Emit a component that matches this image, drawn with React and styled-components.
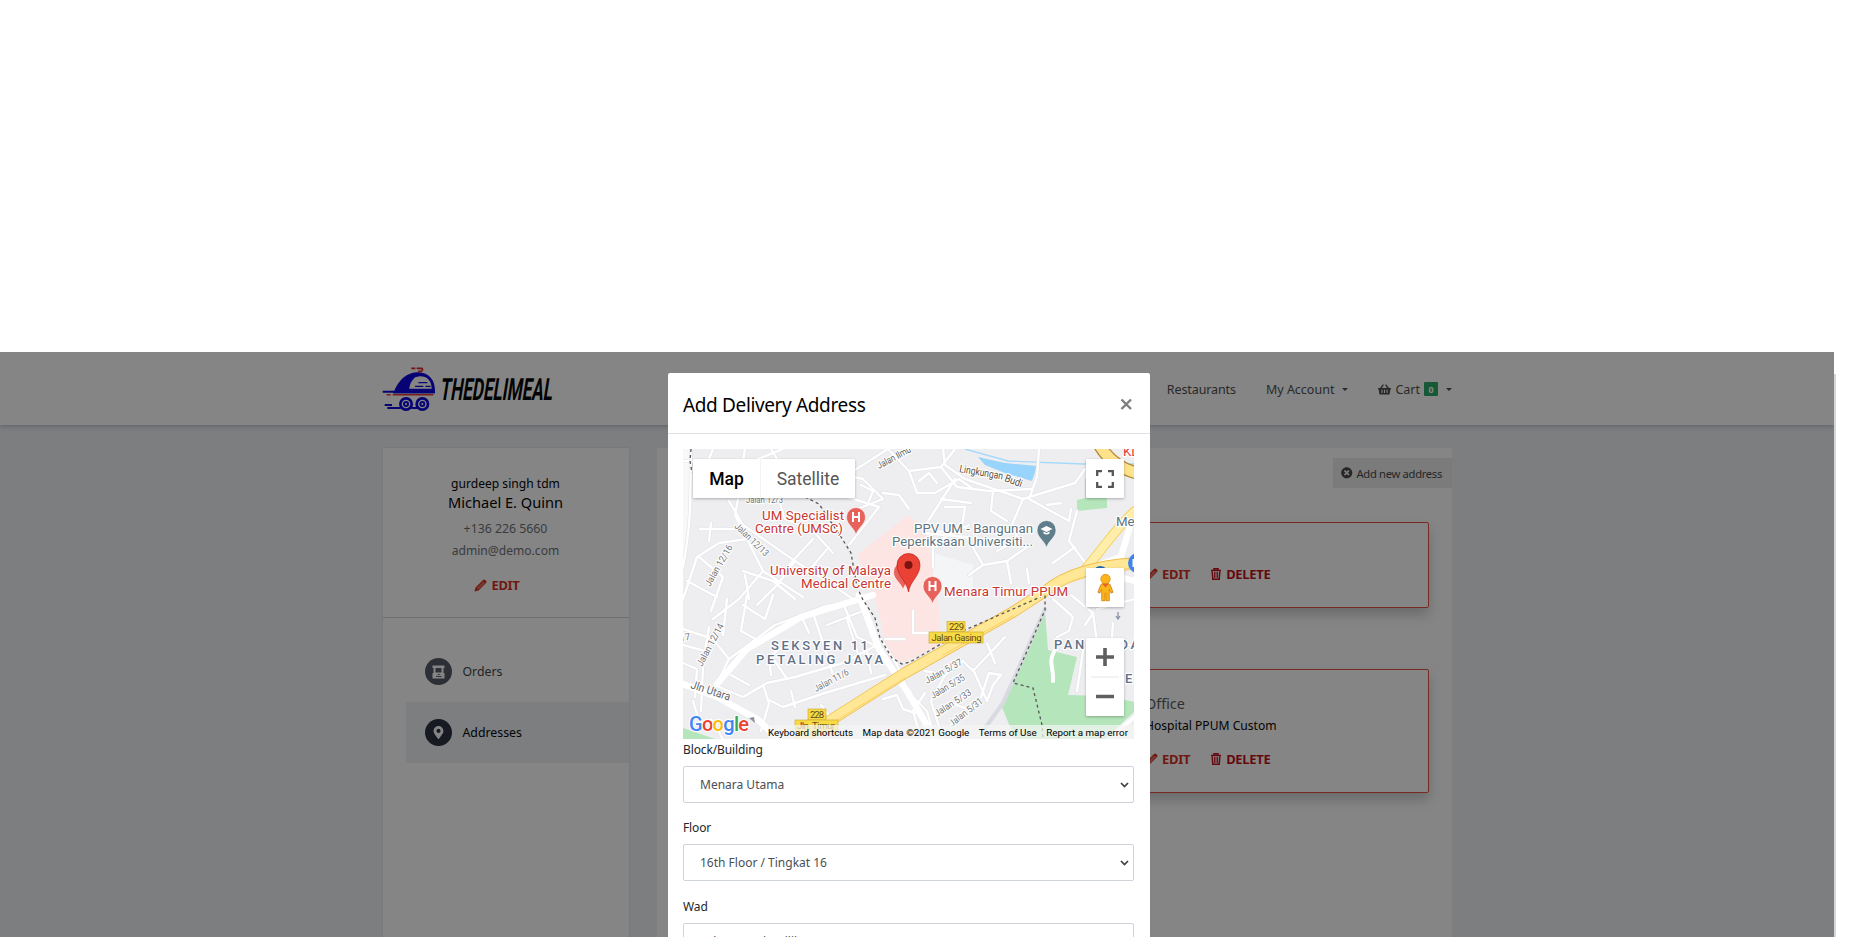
import React from "react";
import styled, { createGlobalStyle, css } from "styled-components";
import { FaShoppingBasket, FaTimesCircle, FaMapMarkerAlt } from "react-icons/fa";

const Global = createGlobalStyle`
  * { box-sizing: border-box; }
  body { margin: 0; background: #fff; overflow: hidden; font-family: "Noto Sans", "Open Sans", sans-serif; font-size: 12.3px; color: #000; }
`;

const Screen = styled.div`width: 1850px; height: 937px; padding-top: 352px; overflow: hidden; display: flex; background: #fff;`;
const Site = styled.div`position: relative; width: 1834px; height: 585px; overflow: hidden; background: #eef1f5;`;
const ScrollTrack = styled.div`width: 2px; margin-top: 22px; background: #d6d6d6;`;

const Header = styled.header`
  height: 73px; padding: 0 382px; display: flex; align-items: center; justify-content: space-between;
  background: #fff; box-shadow: 0 2px 4px rgba(60, 70, 90, 0.25); position: relative;
`;
const Nav = styled.nav`display: flex; align-items: center; height: 73px; padding-top: 1px; color: #4c4c4c; font-size: 12.5px;`;
const NavItem = styled.div`
  display: flex; align-items: center; white-space: nowrap; letter-spacing: ${p => p.$track || 0}px;
  margin-left: ${p => p.$gap || 0}px;
`;
const Basket = styled(FaShoppingBasket)`margin-right: 4px;`;
const Caret = styled.i`border: 3px solid transparent; border-top-color: #4c4c4c; border-bottom: 0; margin-left: ${p => p.$gap}px;`;
const CartCount = styled.span`
  width: 14px; height: 14px; margin-left: 4px; background: #28a965; color: #fff; font-size: 9px; font-weight: 700;
  display: flex; align-items: center; justify-content: center; border-radius: 1px;
`;

const Main = styled.main`display: flex; gap: 28.5px; padding: 23px 382px 0 382.5px; height: 512px;`;
const Sidebar = styled.aside`width: 246px; background: #fff; box-shadow: 0 0 2px rgba(0, 0, 0, 0.12);`;
const Profile = styled.div`
  height: 170px; padding-top: 26px; border-bottom: 1px solid #d5d5d5; display: flex; flex-direction: column; align-items: center;
`;
const Line = styled.div`
  height: ${p => p.$h}px; line-height: ${p => p.$h}px; font-size: ${p => p.$size || 12.1}px; color: ${p => p.$color || "#000"};
  white-space: nowrap; margin-top: ${p => p.$gap || 0}px;
`;
const Action = styled.span`
  display: inline-flex; align-items: center; gap: ${p => p.$gap || 4}px; font-weight: 700; font-size: 13px;
  color: ${p => p.$color || "#d62b1a"}; letter-spacing: -0.3px;
`;
const Menu = styled.ul`list-style: none; margin: 23px 0 0 23px; padding: 0;`;
const MenuItem = styled.li`
  height: 61px; padding-left: 19px; display: flex; align-items: center; gap: 11px;
  color: ${p => (p.$active ? "#000" : "#3b3f45")}; background: ${p => (p.$active ? "#edf2f5" : "transparent")};
`;
const RoundIcon = styled.span`
  width: 27px; height: 27px; border-radius: 50%; display: flex; align-items: center; justify-content: center;
  background: ${p => (p.$active ? "#282c3f" : "#535665")}; color: #fff;
`;

const Content = styled.section`flex: 1; background: #fff; padding-top: 10px; display: flex; flex-direction: column; align-items: flex-end;`;
const AddButton = styled.button`
  border: 0; width: 119px; height: 30px; padding: 0 0 0 8px; background: #ececec; color: #454545; display: flex; align-items: center;
  gap: 4px; font: 11.2px "Noto Sans", sans-serif; white-space: nowrap; letter-spacing: -0.3px;
`;
const AddressCard = styled.article`
  width: 360px; height: ${p => p.$h}px; margin: ${p => p.$top}px 23px 0 0; border: 1px solid #e04f40; border-radius: 2px;
  box-shadow: 0 7px 12px rgba(0, 0, 0, 0.2); padding: 0 0 19px 75px; display: flex; flex-direction: column; justify-content: flex-end;
`;
const Actions = styled.div`
  display: flex; gap: 21px; height: 28px; align-items: center; margin-top: ${p => p.$top || 0}px; padding-right: ${p => p.$shift || 0}px;
`;

const Backdrop = styled.div`position: absolute; inset: 0; background: rgba(6, 6, 6, 0.49); display: flex; justify-content: center; padding: 21px 16px 0 0;`;
const Dialog = styled.div`width: 482px; height: 700px; flex: none; background: #fff; border-radius: 2px 2px 0 0;`;
const DialogHead = styled.div`
  height: 61px; padding: 2px 17px 0 15px; display: flex; align-items: center; justify-content: space-between;
  border-bottom: 1px solid #dee2e6;
`;
const DialogTitle = styled.h5`margin: 2px 0 0; font-weight: 400; font-size: 19px; letter-spacing: -0.36px; white-space: nowrap;`;
const DialogBody = styled.div`padding: 15px 16px 0 15px;`;

const MapBox = styled.div`position: relative; width: 451px; height: 290px; overflow: hidden; font-family: Roboto, sans-serif;`;
const control = css`position: absolute; background: #fff; box-shadow: 0 1px 3px rgba(0, 0, 0, 0.28); border-radius: 1px;`;
const MapType = styled.div`${control} left: 10px; top: 10px; height: 39px; display: flex; align-items: center; font-size: 17.5px;`;
const MapTab = styled.span`
  width: ${p => p.$w}px; height: 39px; display: flex; align-items: center; justify-content: center;
  font-weight: ${p => (p.$on ? 500 : 400)}; color: ${p => (p.$on ? "#000" : "#565656")};
  border-left: ${p => (p.$on ? 0 : "1px solid #f3f3f3")};
`;
const MapButton = styled.div`
  ${control} left: 403px; top: ${p => p.$top}px; width: 38px; height: ${p => p.$h || 39}px;
  display: flex; align-items: center; justify-content: center;
`;
const MapFooter = styled.div`
  position: absolute; right: 0; bottom: 0; height: 14px; padding: 0 6px 0 0; width: 366px; display: flex; align-items: center;
  justify-content: space-between; background: rgba(245, 245, 245, 0.72); font-size: 9.8px; color: #000; white-space: nowrap;
`;

const Field = styled.label`display: block; height: 78.3px;`;
const FieldLabel = styled.span`display: block; height: 27px; line-height: 22px; font-size: 12px; letter-spacing: -0.12px; color: #23272b;`;
const Select = styled.span`
  display: flex; height: 37px; align-items: center; justify-content: space-between; padding: 0 4px 0 16px;
  border: 1px solid #ced4da; border-radius: 2px; font-size: 12px; color: #495057;
`;

const Logo = () => (
  <svg width="173.4" height="46" viewBox="36 60 520 138" overflow="visible">
    <g fill="none" stroke="#0a00e0" strokeWidth="6">
      <path d="M74 139C88 105 112 84 140 82C176 82 193 103 192 139Z" fill="#0a00e0" />
      <path d="M100 128C112 104 128 93 150 91C172 91 184 104 185 128Z" fill="#fff" stroke="none" />
      <path d="M38 137H74M70 139H194M52 186H92M44 177H66M124 186H142" />
      <path d="M86 130C97 102 116 88 139 86C126 96 116 110 114 130Z" fill="#0a00e0" />
      <path d="M145 110H172M135 121H160M166 121H182" strokeWidth="3.5" />
      <circle cx="108" cy="174" r="17" strokeWidth="8" fill="#fff" />
      <circle cx="157" cy="174" r="17" strokeWidth="8" fill="#fff" />
      <circle cx="108" cy="174" r="6" /><circle cx="157" cy="174" r="6" />
    </g>
    <path d="M50 146H62M68 146H190" stroke="#e93434" strokeWidth="4.5" />
    <path d="M124 67H136M140 67H155Q160 70 155 75L144 77" stroke="#e02020" strokeWidth="5" fill="none" />
    <text transform="translate(208 161) skewX(-9)" fontFamily="Roboto, sans-serif" fontWeight="700" fontSize="92"
      textLength="337" lengthAdjust="spacingAndGlyphs" fill="#000">THEDELIMEAL</text>
  </svg>
);

const Pencil = () => (
  <svg width="13" height="13" viewBox="0 0 13 13">
    <path d="M.5 12.5 1.5 8.5 9 1Q10-.1 11.2 1L12.2 2Q13 3 12 4L4.5 11.5Z" fill="currentColor" />
    <path d="M3 9.5 9.7 2.8M4 10.3 10.7 3.6" stroke="#fff" strokeWidth=".5" />
  </svg>
);
const Trash = () => (
  <svg width="10" height="12" viewBox="0 0 10 12" fill="none" stroke="currentColor">
    <path d="M0 2.5H10M3 2V.7H7V2M1.2 3.5 1.8 11.3H8.2L8.8 3.5" strokeWidth="1.5" />
    <path d="M3.5 4V10M5 4V10M6.5 4V10" strokeWidth=".9" />
  </svg>
);
const Shop = () => (
  <svg width="13" height="14" viewBox="0 0 13 14">
    <path d="M.5.5H12.5V3H11.5V8H12.5V13.5H.5V8H1.5V3H.5ZM3.5 3V7.5H9.5V3ZM4 12H9.500V11H4ZM5 10H8.500L6.700 8.700Z" fill="#fff" fillRule="evenodd" />
  </svg>
);
const Chevron = () => (
  <svg width="9" height="6" viewBox="0 0 9 6"><path d="M1 1 4.5 4.6 8 1" fill="none" stroke="#3c4043" strokeWidth="1.7" /></svg>
);

const minorRoads = [
  "M8 0C7 50 9 70 0 118M0 12 60 16 100 0M30 0 26 10M62 0 60 12M88 0 94 10",
  "M95 48 102 70 130 82 150 104M55 50 52 66 64 90 80 122 56 150 30 170M17 80 60 80M28 74 26 92M0 150 14 108 36 94 64 90",
  "M46 52 60 76 112 112 152 138 170 150M112 112 96 134 60 122M96 134 74 156M130 90 104 118M146 98 122 126M80 122 120 148",
  "M16 108 40 128 28 162M4 132 34 148M62 126 66 150M44 150 40 186M90 132 112 150",
  "M164 26 205 0M162 26 180 30 200 50 174 60M200 44 216 46 226 60M178 36 190 42 186 52M146 34 164 48 196 58 166 96",
  "M205 0 226 22 258 18 272 0M226 22 234 44 252 44 276 30 290 40M236 32 246 24 254 34M258 18 274 38 306 42 350 40",
  "M260 0 262 16 282 30M282 30 340 50 392 34 402 20M340 50 328 78 336 90 314 102M356 0 354 28 346 50",
  "M272 30 244 74 250 82 278 84 282 58 262 58M258 50 288 54M310 42 308 62 324 72M346 50 386 72 388 60M364 56 378 54",
  "M394 62 386 92 404 116M240 84 284 88 300 116 286 126M300 116 324 112 328 134M324 112 344 98M370 114 392 98M346 134 344 120",
  "M64 146 58 182 80 194M60 156 82 170 90 146M0 180 30 190 46 210 32 238M0 196 22 202 26 178M46 210 92 176 140 158 178 150",
  "M130 164 144 206 150 226M118 166 126 184M160 154 174 188 200 200M144 176 180 162M164 170 176 208M36 238 60 248 84 234 112 228 160 214 194 196",
  "M80 236 86 254 78 282M84 250 100 258 142 244 202 226M48 226 66 236M92 212 104 230M184 202 188 224M112 258 108 242M138 256 150 272M28 270 40 290M10 252 16 272",
  "M198 190 214 216 226 244 244 262 252 290M242 222 262 226 248 252 260 290M262 226 280 212 290 222 322 188",
  "M304 194 312 214M290 220 304 252 310 236 318 226 306 224 298 248M238 290 230 262 242 244M200 250 214 246 220 260 232 264M268 254 290 262",
  "M370 150 390 168 386 182 374 188M388 146 410 164 402 176M414 160 452 150M410 164 414 194 448 196M430 174 428 202M400 202 394 242",
  "M230 162 230 184 250 184M202 190 222 190M250 118 250 94 286 76M0 214 14 220 12 248M102 196 86 208 88 226M20 218 18 262",
];
const majorRoads = ["M0 235 34 248 74 270 96 290", "M34 235 64 200 118 168 190 146", "M176 146 196 200 224 242 252 290", "M452 60 438 108 404 120 452 132"];

const Halo = styled.text`
  paint-order: stroke; stroke: #fff; stroke-width: ${p => p.$halo ?? 2.4}px; stroke-linejoin: round; font-family: Roboto, sans-serif;
`;
const GoogleMark = styled(Halo)`font-weight: 500; font-size: 20px;`;
const Street = ({ x, y, r = 0, w, children, size = 9.6, fill = "#75777b" }) => (
  <Halo transform={`translate(${x} ${y}) rotate(${r})`} fontSize={size} fill={fill} textLength={w} lengthAdjust="spacingAndGlyphs">{children}</Halo>
);
const Place = ({ x, y, w, children, fill = "#c9362f", size = 13.3, anchor = "end" }) => (
  <Halo x={x} y={y} textAnchor={anchor} fontSize={size} fill={fill} textLength={w}>{children}</Halo>
);
const Pin = ({ x, y, fill, children }) => (
  <g transform={`translate(${x} ${y})`}>
    <path d="M0 18C-2 10-9.5 8-9.5 0A9.5 9.5 0 0 1 9.5 0C9.5 8 2 10 0 18Z" fill={fill} stroke="#fff" strokeWidth=".6" />
    {children}
  </g>
);

const MapArt = () => (
  <svg width="451" height="290" viewBox="0 0 451 290">
    <rect width="452" height="290" fill="#eeeef1" />
    <path d="M0 0H8L7 60 0 116Z" fill="#f8f8f8" />
    <path d="M174 106 225 66 243 81 250 118 256 160 258 196 222 213 205 209 195 160Z" fill="#fce5e2" />
    <path d="M250 104 290 116 290 142 250 140Z" fill="#f3f5f7" />
    <path d="M394 51 402 49V30H424V59L394 62ZM362 163 365 201 394 208 385 246 422 247 452 253V262L422 290H332L319 258 330 235ZM0 279 32 290H0Z" fill="#b5e5ba" />
    <path d="M282 0 325 12 400 15H452" fill="none" stroke="#a4d9fb" strokeWidth="1.3" />
    <path d="M295 8 322 14 354 17 349 32 322 24 302 16Z" fill="#98d4fb" />
    <g fill="none" strokeLinejoin="round" strokeLinecap="round">
      {minorRoads.map(d => <path key={d} d={d} stroke="#e0e2e6" strokeWidth="3.5" />)}
      {minorRoads.map(d => <path key={d} d={d} stroke="#fff" strokeWidth="2.4" />)}
      {majorRoads.map(d => <path key={d} d={d} stroke="#fff" strokeWidth="6.5" />)}
      <path d="M371 203C365 212 371 220 370 232M452 268 432 284" stroke="#fff" strokeWidth="4" />
      <path d="M362 160 320 254 300 282" stroke="#d7dae0" strokeWidth="4" />
      <path d="M452 62C432 80 420 100 404 118" stroke="#f3cf62" strokeWidth="10" />
      <path d="M452 62C432 80 420 100 404 118" stroke="#ffeeaa" strokeWidth="8" />
      <path d="M118 290 222 224 330 163 364 141Q392 118 452 114" stroke="#eebd4c" strokeWidth="11.5" />
      <path d="M118 290 222 224 330 163 364 141Q392 118 452 114" stroke="#ffe795" strokeWidth="9.8" />
      <path d="M140 280 222 229M260 206 330 167M370 141Q400 124 452 120" stroke="#fbd163" strokeWidth="1" />
      <path d="M417 -3Q430 18 454 24" stroke="#b18a38" strokeWidth="13" />
      <path d="M417 -3Q430 18 454 24" stroke="#ffe38c" strokeWidth="10.5" />
    </g>
    <path d="M8 0 7 12 9 24M122 48 136 55 158 88 168 104 174 138 180 151 192 169 197 189 209 209 219 215 227 213 282 181 362 146V161L330 234 350 239 359 276 360 290"
      fill="none" stroke="#575757" strokeWidth="1.3" strokeDasharray="3 3" />
    <Street x={196} y={20} r={-28} w={37} fill="#5e5e5e">Jalan Ilmu</Street>
    <Street x={276} y={23} r={10} w={44} size={10.5} fill="#5e4e40">Lingkungan</Street>
    <Street x={321} y={32} r={20} w={18} size={10.5} fill="#5e4e40">Budi</Street>
    <Street x={63} y={54} w={37}>Jalan 12/3</Street>
    <Street x={51} y={78} r={44} w={43}>Jalan 12/13</Street>
    <Street x={27} y={138} r={-60} w={46}>Jalan 12/16</Street>
    <Street x={19} y={218} r={-62} w={47}>Jalan 12/14</Street>
    <Street x={-17} y={195} r={-10} w={25}>12/17</Street>
    <Street x={7} y={239} r={18} w={41} size={11.5} fill="#5e6469">Jln Utara</Street>
    <Street x={133} y={243} r={-28} w={38}>Jalan 11/6</Street>
    <Street x={244} y={235} r={-29} w={41}>Jalan 5/37</Street>
    <Street x={250} y={250} r={-31} w={38}>Jalan 5/35</Street>
    <Street x={254} y={268} r={-33} w={42}>Jalan 5/33</Street>
    <Street x={269} y={278} r={-38} w={40}>Jalan 5/31</Street>
    <Place x={161} y={71} w={82}>UM Specialist</Place>
    <Place x={160} y={84} w={88}>Centre (UMSC)</Place>
    <Place x={208} y={126} w={121}>University of Malaya</Place>
    <Place x={208} y={139} w={90}>Medical Centre</Place>
    <Place x={261} y={147} w={124} anchor="start">Menara Timur PPUM</Place>
    <Place x={350} y={84} w={119} fill="#5d7380">PPV UM - Bangunan</Place>
    <Place x={350} y={97} w={141} fill="#5d7380">Peperiksaan Universiti...</Place>
    <Place x={433} y={77} anchor="start" fill="#5d7380">Me</Place>
    <Place x={440} y={7} anchor="start" fill="#e53935">KL</Place>
    <g fontWeight="500">
      <Place x={88} y={201} w={97} anchor="start" fill="#627187" size={13}>SEKSYEN 11</Place>
      <Place x={73} y={214.5} w={127} anchor="start" fill="#627187" size={13}>PETALING JAYA</Place>
      <Place x={371} y={200} w={85} anchor="start" fill="#627187" size={13}>PANTAI DA</Place>
      <Place x={442} y={234} anchor="start" fill="#627187" size={13}>E</Place>
    </g>
    <g fill="#f8da45" stroke="#c7a52b" strokeWidth=".6">
      <rect x="264" y="172.5" width="18" height="10" /><rect x="246" y="183" width="54" height="11" />
      <rect x="125" y="260" width="18" height="11" /><rect x="112" y="271" width="43" height="14" />
    </g>
    <g fontFamily="Roboto, sans-serif" fontSize="9.5" fill="#5b4b1c" textAnchor="middle">
      <text x="273.5" y="181" textLength="15">229</text><text x="273.5" y="192" textLength="50">Jalan Gasing</text>
      <text x="134" y="269" textLength="14">228</text><text x="133" y="280" textLength="38">Jln. Timur</text>
    </g>
    <Pin x={173} y={68} fill="#e8625c"><path d="M-3-5V5M3-5V5M-3 0H3" stroke="#fff" strokeWidth="2" /></Pin>
    <Pin x={220} y={123} fill="#e8625c" />
    <Pin x={249.5} y={137} fill="#e8625c"><path d="M-3-5V5M3-5V5M-3 0H3" stroke="#fff" strokeWidth="2" /></Pin>
    <Pin x={363.5} y={81} fill="#607d8b"><path d="M-6-1 0-4 6-1 0 2ZM-3 1.500V3.500Q0 5.500 3 3.500V1.500L0 3Z" fill="#fff" /></Pin>
    <path d="M225.500 143C224 132 214 127 214 116A11.500 11.500 0 0 1 237 116C237 127 227 132 225.500 143Z" fill="#ea4335" stroke="#b31412" strokeWidth=".6" />
    <circle cx="225.5" cy="116" r="4" fill="#7d1310" />
    <circle cx="455" cy="114" r="10" fill="#3f83ee" /><path d="M451 110V118" stroke="#fff" strokeWidth="3" />
    <path d="M411 120Q417 114 424 120Z" fill="#1668b8" />
    <path d="M435 163V170M433 167 435 170 437 167" stroke="#8c96a5" fill="none" strokeWidth="1.3" />
    <path d="M66 269 72 274 71 268" fill="#8c9099" />
    <GoogleMark x="6" y="282" $halo={2} textLength="60">
      <tspan fill="#4285f4">G</tspan><tspan fill="#ea4335">o</tspan><tspan fill="#fbbc05">o</tspan><tspan fill="#4285f4">g</tspan><tspan fill="#34a853">l</tspan><tspan fill="#ea4335">e</tspan>
    </GoogleMark>
  </svg>
);

const Pegman = () => (
  <svg width="17" height="30" viewBox="0 0 18 31">
    <path d="M4 12Q9 8 14 12L17 20 15 21 13 17V29H9.500V21H8.500V29H5V17L3 21 1 20Z" fill="#fbb51a" stroke="#c77a15" strokeWidth=".8" />
    <circle cx="9" cy="6" r="5" fill="#fbb51a" stroke="#d88c16" strokeWidth=".8" /><path d="M5.500 11H12.500L9 15Z" fill="#e8622a" />
  </svg>
);

const DeliveryMap = () => (
  <MapBox>
    <MapArt />
    <MapType><MapTab $on $w={67}>Map</MapTab><MapTab $w={95}>Satellite</MapTab></MapType>
    <MapButton $top={10}>
      <svg width="18" height="18" viewBox="0 0 18 18"><path d="M1.200 6V1.200H6M12 1.200H16.800V6M16.800 12V16.800H12M6 16.800H1.200V12" fill="none" stroke="#565656" strokeWidth="2.3" /></svg>
    </MapButton>
    <MapButton $top={119}><Pegman /></MapButton>
    <MapButton $top={189} $h={78}>
      <svg width="30" height="78" viewBox="0 0 30 78"><path d="M6 19H24M15 10V28M6 58.500H24" stroke="#5f5f5f" strokeWidth="3.6" /><path d="M1 39H29" stroke="#e6e6e6" /></svg>
    </MapButton>
    <MapFooter><span>Keyboard shortcuts</span><span>Map data ©2021 Google</span><span>Terms of Use</span><span>Report a map error</span></MapFooter>
  </MapBox>
);

const CardActions = ({ top }) => (
  <Actions $top={top}>
    <Action><Pencil />EDIT</Action>
    <Action $color="#c00d18" $gap={5}><Trash />DELETE</Action>
  </Actions>
);

const FormField = ({ label, value }) => (
  <Field><FieldLabel>{label}</FieldLabel><Select>{value}<Chevron /></Select></Field>
);

export default function App() {
  return (
    <>
      <Global />
      <Screen>
        <Site>
          <Header>
            <Logo />
            <Nav>
              <NavItem $track={-0.1}>Restaurants</NavItem>
              <NavItem $gap={30}>My Account<Caret $gap={8} /></NavItem>
              <NavItem $gap={30}><Basket size={13} />Cart<CartCount>0</CartCount><Caret $gap={8} /></NavItem>
            </Nav>
          </Header>
          <Main>
            <Sidebar>
              <Profile>
                <Line $h={19}>gurdeep singh tdm</Line>
                <Line $h={18} $size={14.6}>Michael E. Quinn</Line>
                <Line $h={22} $gap={7} $size={12.3} $color="#6c6f75">+136 226 5660</Line>
                <Line $h={22} $color="#6c6f75">admin@demo.com</Line>
                <Actions $top={9} $shift={17}><Action><Pencil />EDIT</Action></Actions>
              </Profile>
              <Menu>
                <MenuItem><RoundIcon><Shop /></RoundIcon>Orders</MenuItem>
                <MenuItem $active><RoundIcon $active><FaMapMarkerAlt size={13} /></RoundIcon>Addresses</MenuItem>
              </Menu>
            </Sidebar>
            <Content>
              <AddButton><FaTimesCircle size={11.5} />Add new address</AddButton>
              <AddressCard $h={86} $top={34}><CardActions /></AddressCard>
              <AddressCard $h={124} $top={61}>
                <Line $h={23} $size={14.4} $color="#555a60">Office</Line>
                <Line $h={21}>Hospital PPUM Custom</Line>
                <CardActions top={9} />
              </AddressCard>
            </Content>
          </Main>
          <Backdrop>
            <Dialog>
              <DialogHead>
                <DialogTitle>Add Delivery Address</DialogTitle>
                <svg width="13" height="13" viewBox="0 0 13 13"><path d="M1.500 1.500 11 11M11 1.500 1.500 11" stroke="#7f7f7f" strokeWidth="2.4" /></svg>
              </DialogHead>
              <DialogBody>
                <DeliveryMap />
                <FormField label="Block/Building" value="Menara Utama" />
                <FormField label="Floor" value="16th Floor / Tingkat 16" />
                <FormField label="Wad" value="Select Ward / Bilik" />
              </DialogBody>
            </Dialog>
          </Backdrop>
        </Site>
        <ScrollTrack />
      </Screen>
    </>
  );
}
